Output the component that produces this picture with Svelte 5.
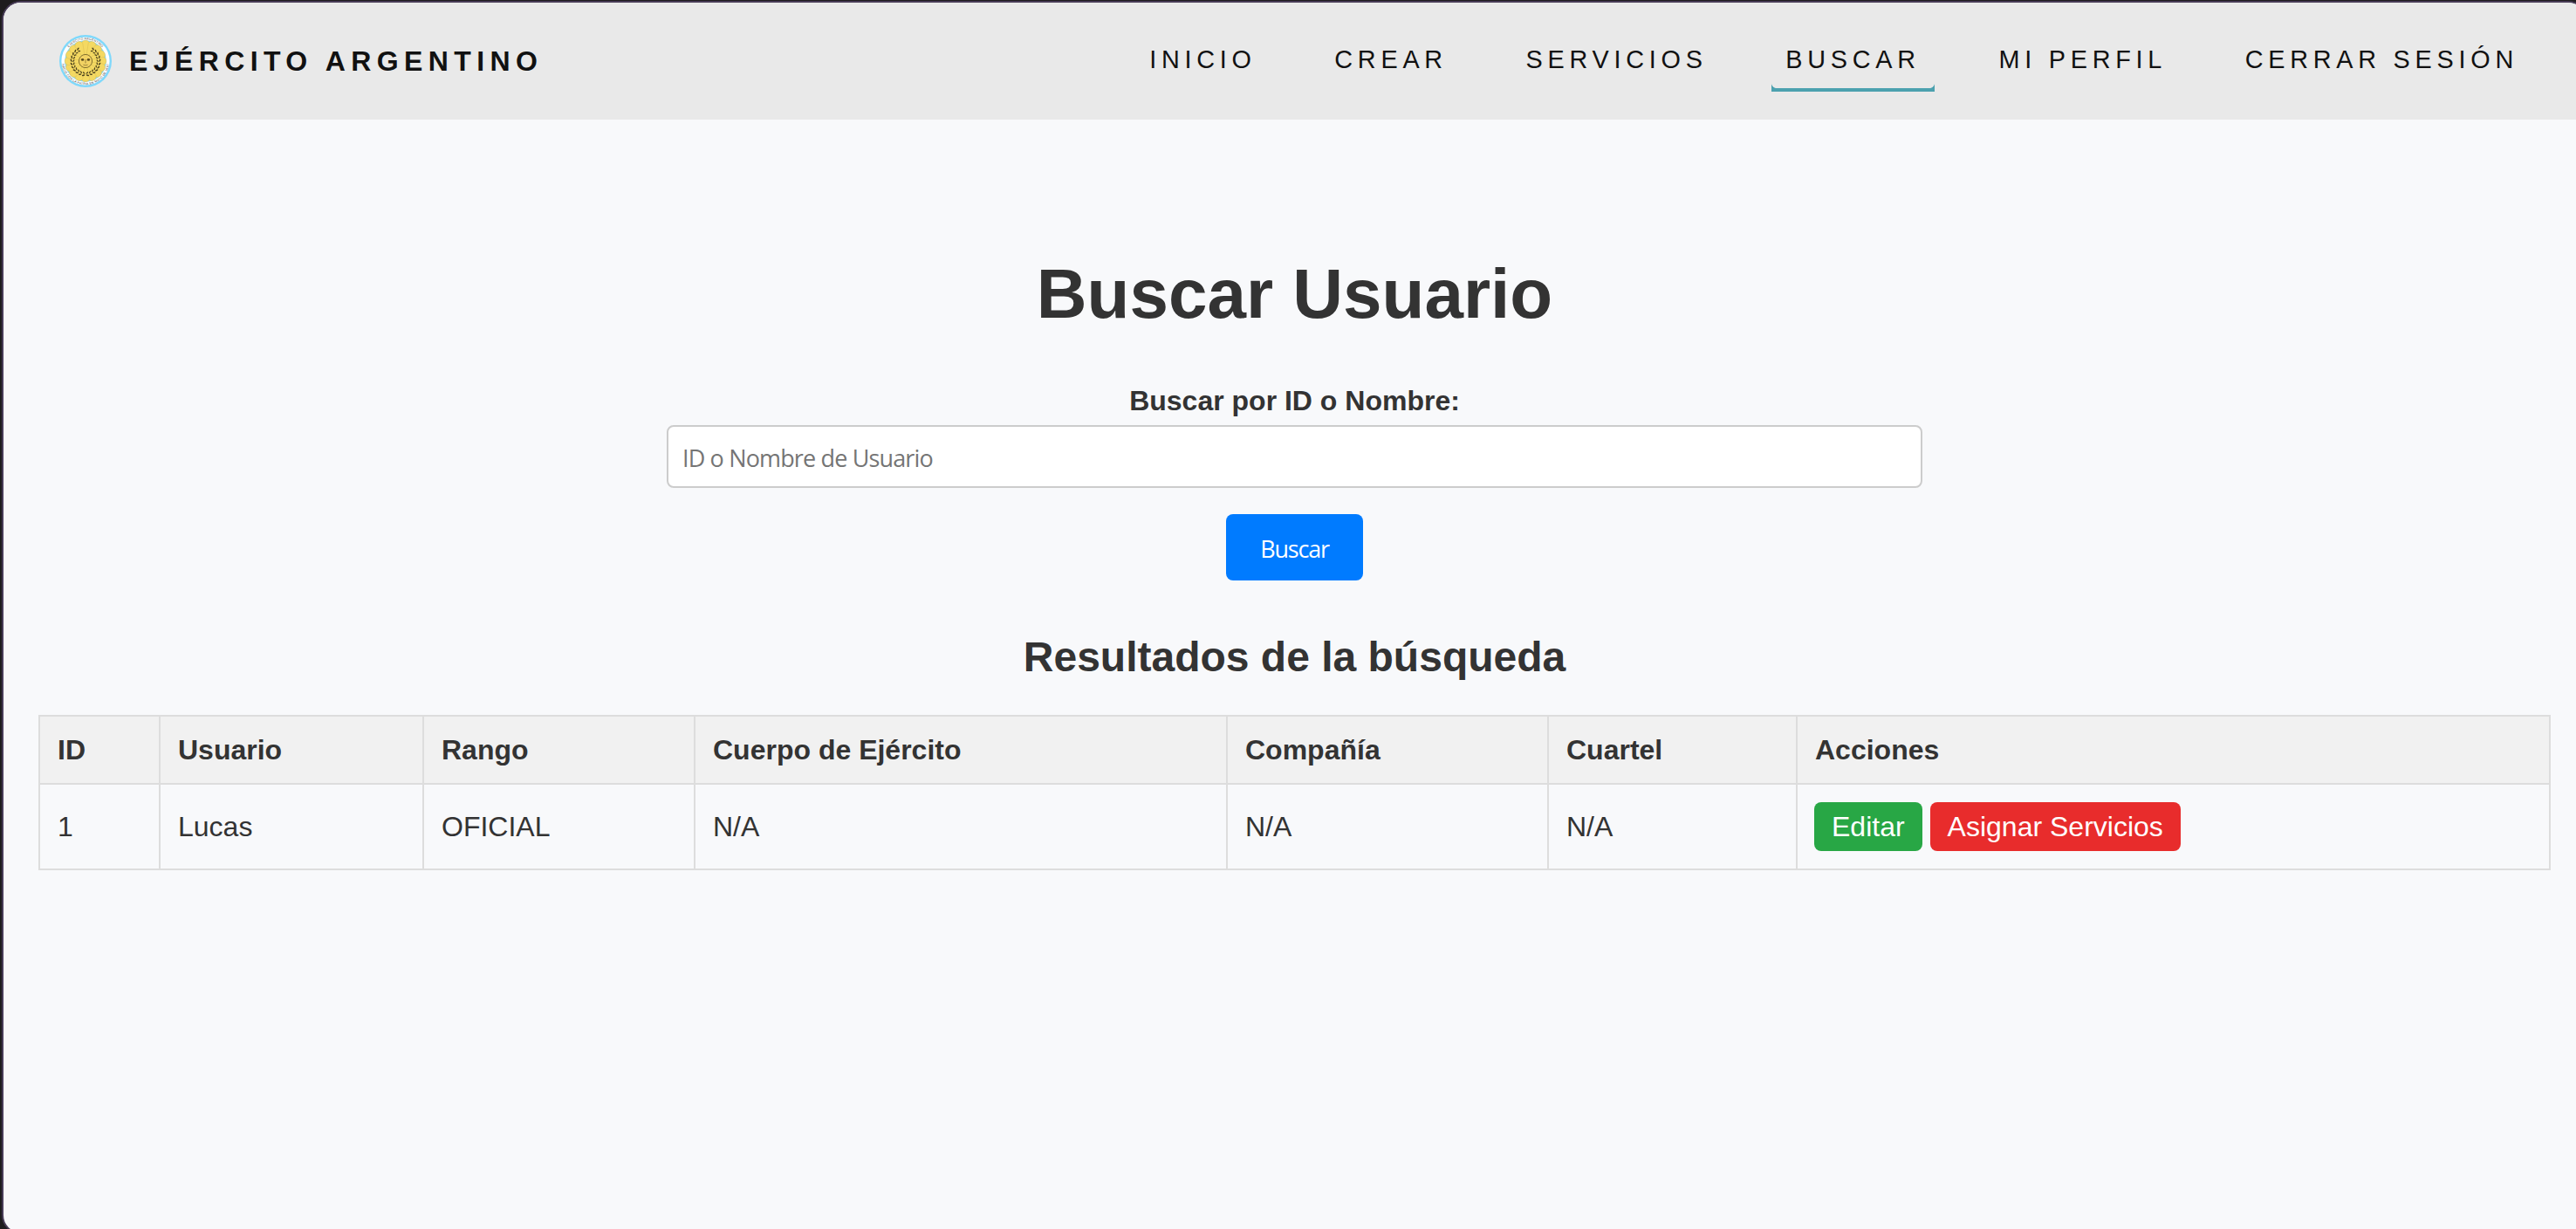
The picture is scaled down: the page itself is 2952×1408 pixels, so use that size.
<script>
  const links = ['Inicio', 'Crear', 'Servicios', 'Buscar', 'Mi perfil', 'Cerrar sesión'];
  const active = 'Buscar';
  const columns = [
    { title: 'ID', key: 'id', width: 138 },
    { title: 'Usuario', key: 'user', width: 302 },
    { title: 'Rango', key: 'rank', width: 311 },
    { title: 'Cuerpo de Ejército', key: 'corps', width: 610 },
    { title: 'Compañía', key: 'company', width: 368 },
    { title: 'Cuartel', key: 'barracks', width: 285 }
  ];
  const rows = [
    { id: '1', user: 'Lucas', rank: 'OFICIAL', corps: 'N/A', company: 'N/A', barracks: 'N/A' }
  ];
  const petals = Array.from({ length: 16 }, (_, i) => i * 22.5);
  const leaves = Array.from({ length: 11 }, (_, i) => 28 + i * 14);
</script>

<div class="window">
  <header>
    <div class="brand">
      <svg class="logo" viewBox="0 0 60 60" aria-hidden="true">
        <defs>
          <path id="arc-top" d="M5.4 30 A24.6 24.6 0 0 1 54.6 30" />
          <path id="arc-bottom" d="M2.8 30 A27.2 27.2 0 0 0 57.2 30" />
        </defs>
        <circle cx="30" cy="30" r="30" fill="#7fd8fb" />
        <circle cx="30" cy="30" r="27.6" fill="#fff" />
        <circle cx="30" cy="30" r="23.8" fill="#86d9f8" />
        <g fill="#f4d962" stroke="#d6b850" stroke-width="0.4">
          {#each petals as angle}
            <path d="M30 30 L25.2 10 Q25.8 6.4 30 6.2 Q34.2 6.4 34.8 10 Z" transform="rotate({angle} 30 30)" />
          {/each}
        </g>
        <g fill="#4c421d">
          {#each leaves as angle}
            <g transform="rotate({angle} 30 30)">
              <ellipse cx="31" cy="13.6" rx="1.8" ry="0.8" transform="rotate(28 31 13.6)" />
              <ellipse cx="31" cy="16.4" rx="1.6" ry="0.7" transform="rotate(-28 31 16.4)" />
            </g>
            <g transform="rotate({-angle} 30 30)">
              <ellipse cx="29" cy="13.6" rx="1.8" ry="0.8" transform="rotate(-28 29 13.6)" />
              <ellipse cx="29" cy="16.4" rx="1.6" ry="0.7" transform="rotate(28 29 16.4)" />
            </g>
          {/each}
        </g>
        <circle cx="30" cy="30" r="7.6" fill="#f2d263" stroke="#675722" stroke-width="0.8" />
        <g fill="#5b4c1d">
          <ellipse cx="26.6" cy="28.4" rx="1.7" ry="1.4" />
          <ellipse cx="33.4" cy="28.4" rx="1.7" ry="1.4" />
        </g>
        <path d="M29.2 31.8h1.6M27.4 34.2q2.6 1.4 5.2 0M30 28v3" fill="none" stroke="#8a7430" stroke-width="0.8" />
        <text class="seal"><textPath href="#arc-top" startOffset="50%" text-anchor="middle">EJERCITO ARGENTINO</textPath></text>
        <text class="seal"><textPath href="#arc-bottom" startOffset="50%" text-anchor="middle">NACIO CON LA PATRIA EN MAYO DE 1810</textPath></text>
      </svg>
      <span>Ejército Argentino</span>
    </div>
    <nav>
      {#each links as link}
        <a class:active={link === active}>{link}</a>
      {/each}
    </nav>
  </header>

  <main>
    <h1>Buscar Usuario</h1>
    <form>
      <label for="query">Buscar por ID o Nombre:</label>
      <input id="query" type="text" placeholder="ID o Nombre de Usuario" />
      <button type="button">Buscar</button>
    </form>
    <h2>Resultados de la búsqueda</h2>
    <table>
      <colgroup>
        {#each columns as column}
          <col style="width: {column.width}px" />
        {/each}
        <col />
      </colgroup>
      <thead>
        <tr>
          {#each columns as column}
            <th>{column.title}</th>
          {/each}
          <th>Acciones</th>
        </tr>
      </thead>
      <tbody>
        {#each rows as row}
          <tr>
            {#each columns as column}
              <td>{row[column.key]}</td>
            {/each}
            <td>
              <div class="actions">
                <span class="action edit">Editar</span>
                <span class="action assign">Asignar Servicios</span>
              </div>
            </td>
          </tr>
        {/each}
      </tbody>
    </table>
  </main>
</div>

<style>
  :global(html) {
    overflow: hidden;
  }
  :global(body) {
    margin: 0;
    height: 1408px;
    overflow: hidden;
    background: #1e1c1e;
    font-family: 'Liberation Sans', Arial, sans-serif;
  }
  .window {
    box-sizing: border-box;
    width: 2963px;
    height: 1413px;
    margin: 1px 0 0 2px;
    border: 2px solid #473b56;
    border-radius: 22px;
    overflow: hidden;
    background: #f8f9fb;
    color: #333;
    font-size: 32px;
  }
  header {
    display: flex;
    align-items: center;
    justify-content: space-between;
    height: 134px;
    box-sizing: border-box;
    padding: 0 61px 0 64px;
    background: #e9e9e9;
    color: #111;
    text-transform: uppercase;
  }
  .brand {
    display: flex;
    align-items: center;
    gap: 20px;
    font-weight: 700;
    letter-spacing: 6.4px;
  }
  .logo {
    width: 60px;
    height: 60px;
  }
  .seal {
    font-size: 3.5px;
    font-weight: 400;
    letter-spacing: 0.25px;
    fill: #444;
  }
  nav {
    display: flex;
    gap: 57.6px;
    font-size: 28.8px;
    letter-spacing: 5.76px;
  }
  nav a {
    padding: 16px;
    line-height: 34px;
    border-bottom: 4px solid transparent;
  }
  nav .active {
    border-bottom-color: #4ca1af;
    background:
      radial-gradient(circle at 100% 0, transparent 5.6px, #4ca1af 6.4px) left bottom / 6px 6px no-repeat,
      radial-gradient(circle at 0 0, transparent 5.6px, #4ca1af 6.4px) right bottom / 6px 6px no-repeat;
  }
  main {
    padding: 0 40px;
    text-align: center;
  }
  h1 {
    margin: 154px 0 0;
    font-size: 80px;
    line-height: 92px;
  }
  form {
    display: flex;
    flex-direction: column;
    align-items: center;
    margin-top: 58px;
  }
  label {
    font-weight: 700;
    line-height: 36px;
  }
  input {
    box-sizing: border-box;
    width: 1439px;
    height: 72px;
    margin-top: 10px;
    padding: 2px 16px 0;
    border: 2px solid #ccc;
    border-radius: 8px;
    background: #fff;
    font: 27px 'Open Sans', sans-serif;
    letter-spacing: -0.85px;
  }
  input::placeholder {
    color: #757575;
    opacity: 1;
  }
  button {
    width: 157px;
    height: 76px;
    margin-top: 30px;
    padding: 2px 0 0;
    border: 0;
    border-radius: 8px;
    background: #007bff;
    color: #fff;
    font: 27px 'Open Sans', sans-serif;
    letter-spacing: -1.2px;
  }
  h2 {
    margin: 60px 0 0;
    font-size: 48px;
    line-height: 56px;
  }
  table {
    width: 2879px;
    margin-top: 38px;
    border-collapse: collapse;
    table-layout: fixed;
    text-align: left;
  }
  th,
  td {
    padding: 20px;
    border: 2px solid #ddd;
    line-height: 36px;
  }
  th {
    background: #f1f1f1;
  }
  td:last-child {
    padding-left: 19px;
  }
  .actions {
    display: flex;
    gap: 9px;
  }
  .action {
    padding: 10px 20px;
    border-radius: 8px;
    color: #fff;
  }
  .edit {
    background: #28a745;
  }
  .assign {
    background: #e82c2c;
  }
</style>
